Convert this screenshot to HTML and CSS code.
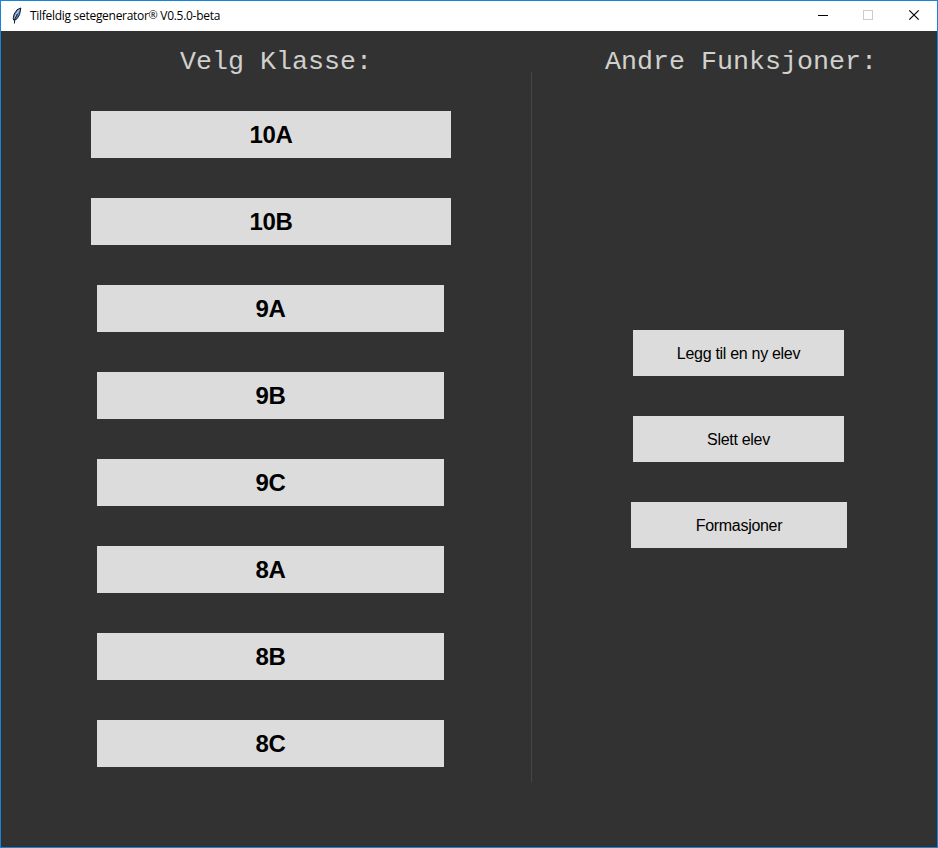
FILE: index.html
```html
<!DOCTYPE html>
<html lang="no">
<head>
<meta charset="utf-8">
<title>Tilfeldig setegenerator® V0.5.0-beta</title>
<link rel="stylesheet" href="styles.css">
</head>
<body>
<div class="window">
  <header class="titlebar">
    <svg class="feather" width="12" height="18" viewBox="0 0 12 18">
      <path d="M9.8 1 L6 2.8 L3.2 7 L2.2 11.5 L3 13.5 L6 11.8 L8.6 7.5 Z" fill="#5d8fc9" stroke="#101820" stroke-width="1"/>
      <path d="M8.3 2.8 L5 7.5 L3.5 12" fill="none" stroke="#c4dcf2" stroke-width="1"/>
      <path d="M6.5 7 L3.8 12 L3.4 16.5" fill="none" stroke="#101820" stroke-width="1"/>
    </svg>
    <span class="title">Tilfeldig setegenerator<span class="mark">®</span> V0.5.0-beta</span>
    <div class="controls">
      <svg width="46" height="30" viewBox="0 0 46 30" shape-rendering="crispEdges"><path d="M18 14.5H28" stroke="#000"/></svg>
      <svg width="46" height="30" viewBox="0 0 46 30" shape-rendering="crispEdges"><rect x="17.5" y="9.5" width="9" height="9" fill="none" stroke="#ccc"/></svg>
      <svg width="46" height="30" viewBox="0 0 46 30"><path d="M17.3 9.3L26.7 18.7M26.7 9.3L17.3 18.7" stroke="#000" stroke-width="1.2"/></svg>
    </div>
  </header>
  <main class="content">
    <section class="classes">
      <h1 class="heading heading-classes">Velg Klasse:</h1>
      <div class="class-list">
        <button class="class-button wide">10A</button>
        <button class="class-button wide">10B</button>
        <button class="class-button">9A</button>
        <button class="class-button">9B</button>
        <button class="class-button">9C</button>
        <button class="class-button">8A</button>
        <button class="class-button">8B</button>
        <button class="class-button">8C</button>
      </div>
    </section>
    <div class="divider"></div>
    <section class="functions">
      <h1 class="heading heading-functions">Andre Funksjoner:</h1>
      <div class="function-list">
        <button class="function-button">Legg til en ny elev</button>
        <button class="function-button">Slett elev</button>
        <button class="function-button wide">Formasjoner</button>
      </div>
    </section>
  </main>
</div>
</body>
</html>
```
FILE: styles.css
```css
* { box-sizing: border-box; }

body { margin: 0; }

.window {
  display: flex;
  flex-direction: column;
  width: 938px;
  height: 848px;
  border: 1px solid #1883d7;
  background: #323232;
  overflow: hidden;
}

.titlebar {
  display: flex;
  align-items: center;
  height: 30px;
  padding-left: 10px;
  background: #fff;
}

.title {
  margin-left: 7px;
  font: 12px/30px "Open Sans", "Noto Sans", sans-serif;
  letter-spacing: -0.29px;
  color: #000;
  white-space: nowrap;
}

.mark {
  font-size: 11px;
  line-height: 1;
  vertical-align: 1px;
}

.controls {
  display: flex;
  margin-left: auto;
  margin-right: -1px;
}

.content {
  display: flex;
  flex: 1;
}

.classes {
  flex: none;
  width: 530px;
}

.heading {
  margin: 16px 0 0;
  font: 400 26.67px/30px "Liberation Mono", monospace;
  color: #d0d0cc;
  white-space: pre;
}

.heading-classes { padding-left: 179px; }
.heading-functions { padding-left: 73px; }

.class-list {
  display: flex;
  flex-direction: column;
  align-items: flex-start;
  gap: 40px;
  margin-top: 34px;
  padding-left: 90px;
}

button {
  padding: 0;
  border: 0;
  background: #dcdcdc;
  color: #000;
  font-family: "Liberation Sans", sans-serif;
}

.class-button {
  width: 347px;
  height: 47px;
  margin-left: 6px;
  font-size: 24px;
  font-weight: 700;
  letter-spacing: -0.4px;
}

.class-button.wide {
  width: 360px;
  margin-left: 0;
}

.divider {
  flex: none;
  width: 1px;
  height: 710px;
  margin-top: 41px;
  background: #464646;
}

.functions { flex: 1; }

.function-list {
  display: flex;
  flex-direction: column;
  align-items: flex-start;
  gap: 40px;
  margin-top: 253px;
  padding-left: 99px;
}

.function-button {
  width: 211px;
  height: 46px;
  margin-left: 2px;
  padding-top: 2px;
  font-size: 16px;
  letter-spacing: -0.3px;
}

.function-button.wide {
  width: 216px;
  margin-left: 0;
}
```
